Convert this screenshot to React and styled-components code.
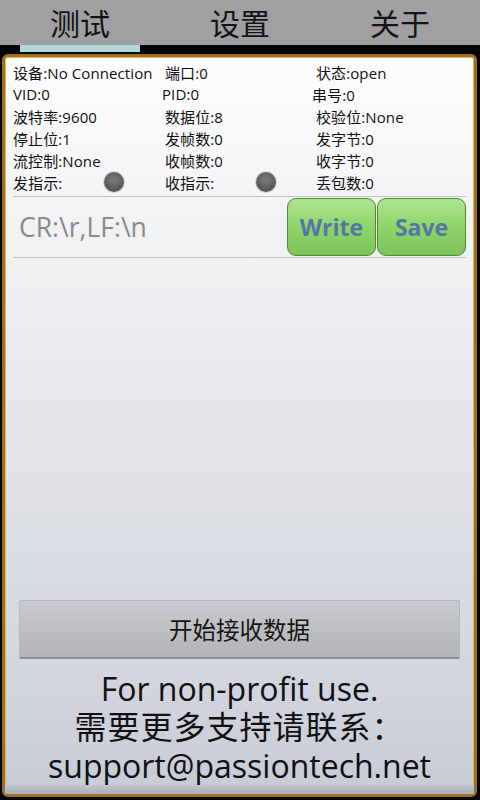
import React from "react";
import styled, { createGlobalStyle } from "styled-components";

const GlobalStyle = createGlobalStyle`
  html, body {
    margin: 0;
    padding: 0;
    background: #000;
  }
  body {
    font-family: "Open Sans", "Noto Sans CJK SC", sans-serif;
  }
`;

const Screen = styled.div`
  width: 480px;
  height: 800px;
  display: flex;
  flex-direction: column;
  background: #050505;
  overflow: hidden;
`;

const TabBar = styled.div`
  height: 45px;
  display: grid;
  grid-template-columns: repeat(3, 1fr);
  background: #a09fa2;
`;

const Tab = styled.div`
  display: flex;
  align-items: center;
  justify-content: center;
  font-size: 30px;
  color: #141414;
  font-family: "Noto Sans CJK SC", sans-serif;
  line-height: 1;
  padding-bottom: 2px;
`;

const IndicatorStrip = styled.div`
  height: 9px;
  display: grid;
  grid-template-columns: repeat(3, 1fr);
`;

const Indicator = styled.div`
  margin: 0 20px 2px;
  background: ${(p) => (p.$active ? "#b3d6d8" : "transparent")};
`;

const Panel = styled.div`
  flex: 1;
  margin: 0 3px 3px 2px;
  border: 3px solid #9c6f22;
  border-radius: 6px;
  box-shadow: inset 0 0 0 1px #e2b75a;
  background: linear-gradient(#fdfdfd 0%, #eeeff1 30%, #d2d5de 85%, #c7cbd5 100%);
  display: flex;
  flex-direction: column;
  padding: 4px 8px 0 8px;
`;

const InfoGrid = styled.div`
  display: grid;
  grid-template-columns: 152px 151px 1fr;
  grid-auto-rows: 22px;
`;

const Cell = styled.div`
  display: flex;
  align-items: center;
  font-size: 15px;
  letter-spacing: 0.1px;
  color: #111;
  white-space: nowrap;
  margin-left: ${(p) => p.$shift || 0}px;
`;

const Lamp = styled.span`
  width: 20px;
  height: 20px;
  border-radius: 50%;
  margin-left: ${(p) => p.$offset}px;
  background: radial-gradient(circle at 50% 40%, #7a7a7a, #555 75%);
  box-shadow: 0 0 0 1px #d8d8d8;
`;

const WriteRow = styled.div`
  margin-top: 3px;
  border-top: 1px solid #c4c4c4;
  border-bottom: 1px solid #c4c4c4;
  height: 60px;
  display: flex;
  align-items: center;
`;

const Hint = styled.div`
  flex: 1;
  padding-left: 6px;
  font-size: 26.5px;
  color: #8a8a8a;
`;

const GreenButton = styled.button`
  width: 89px;
  height: 58px;
  margin-left: 1px;
  border: 1px solid #4c8b34;
  border-radius: 9px;
  background: linear-gradient(#aee58f, #8fd46a 50%, #7ec25a);
  color: #5577a6;
  font-family: "Open Sans", sans-serif;
  font-weight: bold;
  font-size: 23px;
  padding: 0;
`;

const Spacer = styled.div`
  flex: 1;
`;

const StartButton = styled.button`
  margin: 0 6px;
  height: 59px;
  border: 1px solid #b4b6ba;
  border-bottom: 2px solid #8a8c90;
  border-radius: 2px;
  background: linear-gradient(#c9cacd, #b2b4b8);
  font-family: "Noto Sans CJK SC", sans-serif;
  font-size: 23.5px;
  color: #141414;
  padding: 0;
`;

const Footer = styled.div`
  padding-top: 11px;
  display: flex;
  flex-direction: column;
  align-items: center;
  color: #111;
`;

const FooterLine = styled.div`
  height: 38.5px;
  display: flex;
  align-items: center;
  font-size: 32px;
  line-height: 1;
  letter-spacing: ${(p) => (p.$cjk ? "1px" : "0")};
  white-space: nowrap;
`;

const BottomShade = styled.div`
  height: 9px;
  margin: 0 -8px;
  background: linear-gradient(#c2c6cf, #a9aeb8);
`;

const rows = [
  [{ t: "设备:No Connection" }, { t: "端口:0" }, { t: "状态:open" }],
  [{ t: "VID:0" }, { t: "PID:0", s: -3 }, { t: "串号:0", s: -4 }],
  [{ t: "波特率:9600" }, { t: "数据位:8" }, { t: "校验位:None" }],
  [{ t: "停止位:1" }, { t: "发帧数:0" }, { t: "发字节:0" }],
  [{ t: "流控制:None" }, { t: "收帧数:0" }, { t: "收字节:0" }],
];

export default function App() {
  return (
    <Screen>
      <GlobalStyle />
      <TabBar>
        <Tab>测试</Tab>
        <Tab>设置</Tab>
        <Tab>关于</Tab>
      </TabBar>
      <IndicatorStrip>
        <Indicator $active />
        <Indicator />
        <Indicator />
      </IndicatorStrip>
      <Panel>
        <InfoGrid>
          {rows.map((row, i) =>
            row.map((c, j) => (
              <Cell key={`${i}-${j}`} $shift={c.s}>
                {c.t}
              </Cell>
            ))
          )}
          <Cell>
            发指示:
            <Lamp $offset={42} />
          </Cell>
          <Cell>
            收指示:
            <Lamp $offset={42} />
          </Cell>
          <Cell>丢包数:0</Cell>
        </InfoGrid>
        <WriteRow>
          <Hint>CR:\r,LF:\n</Hint>
          <GreenButton>Write</GreenButton>
          <GreenButton>Save</GreenButton>
        </WriteRow>
        <Spacer />
        <StartButton>开始接收数据</StartButton>
        <Footer>
          <FooterLine>For non-profit use.</FooterLine>
          <FooterLine $cjk>需要更多支持请联系：</FooterLine>
          <FooterLine>support@passiontech.net</FooterLine>
        </Footer>
        <BottomShade />
      </Panel>
    </Screen>
  );
}
